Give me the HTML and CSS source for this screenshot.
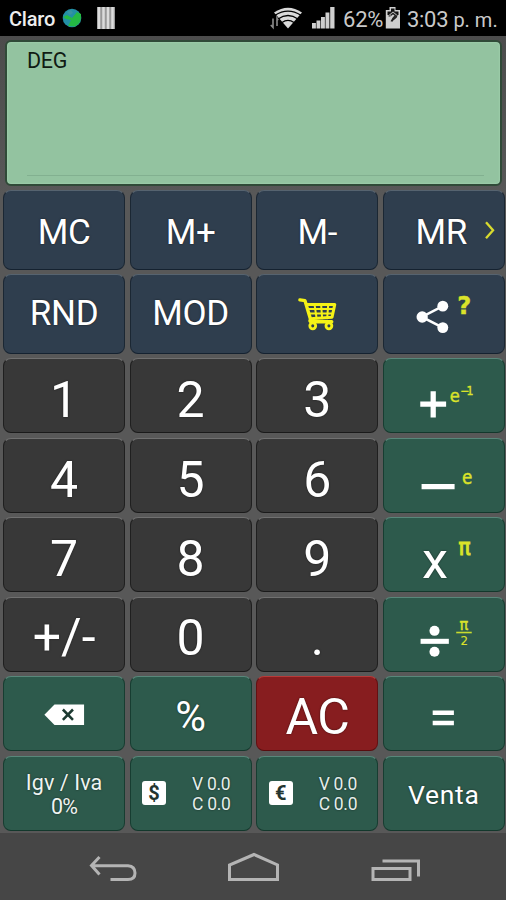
FILE: index.html
```html
<!DOCTYPE html>
<html lang="es">
<head>
<meta charset="utf-8">
<title>Calculadora</title>
<link rel="stylesheet" href="styles.css">
</head>
<body>
<div class="phone">
  <header class="status">
    <span class="carrier">Claro</span>
    <svg class="globe" width="20" height="20" viewBox="0 0 20 20"><circle cx="10" cy="10" r="9.3" fill="#238fa6"/><path d="M1 9 L5 7 L10 10 L15 4 L19 6 Q20 15 13 18.500 L6 18 L9 12 L4 11Z" fill="#24b944"/><path d="M5 4l4-2 2 3-3 2z" fill="#3894a0"/></svg>
    <svg class="stripes" width="18" height="22" viewBox="0 0 18 22"><rect width="18" height="22" fill="#999"/><path d="M2 0v22M6.500 0v22M11 0v22M15.500 0v22" stroke="#dcdcdc" stroke-width="2.500"/></svg>
    <svg class="signal" width="66" height="24" viewBox="0 0 66 24"><path d="M3 12.500v9M0.800 19l2.200 2.500V13M7 20v-8l1.500 2" fill="none" stroke="#8c8c8c" stroke-width="1.600"/><path d="M18 22.500L4 6.500Q18 -3 32 6.500Z" fill="#dadada"/><path d="M5 9.300Q18 1 31 9.300M8 13Q18 6 28 13M12 16.600Q18 12 24 16.600" fill="none" stroke="#000" stroke-width="1.300"/><path d="M42 22.500v-5.500h3.900v5.500zM46.500 22.500v-8h3.900v8zM51 22.500V11h3.900v11.500zM55.500 22.500V6.500h3.900v16zM60.200 22.500V1h4.300v21.500z" fill="#cfcfcf"/></svg>
    <span class="percent">62%</span>
    <svg class="battery" width="16" height="24" viewBox="0 0 16 24"><path d="M4.500 4V1h6v3H15v18.500H.800V4z" fill="#cfcfcf"/><path d="M2.500 9V5.500H6v-3h3.500v3h4V9" fill="#111"/><path d="M4.500 10.500c.5-4.500 7-4.500 7-1 0 3-4 2.500-5 6" fill="none" stroke="#222" stroke-width="2"/><path d="M4 9L8 5.500L12 9L8 12Z" fill="#cfcfcf"/><path d="M5.500 9.500L8 7.500L10.500 9.500L7.500 13" fill="none" stroke="#222" stroke-width="1.600"/></svg>
    <span class="time">3:03 <small>p. m.</small></span>
  </header>

  <main class="calc">
    <section class="lcd"><span class="mode">DEG</span><span class="rule"></span></section>
    <section class="keys">
      <div class="key navy">MC</div>
      <div class="key navy">M+</div>
      <div class="key navy">M-</div>
      <div class="key navy mr">MR<svg class="art" viewBox="0 0 122 79"><path d="M103 31.500L110 39.500L103 47.500" fill="none" stroke="#d8da2e" stroke-width="2.300"/></svg></div>
      <div class="key navy rnd">RND</div>
      <div class="key navy rnd">MOD</div>
      <div class="key navy"><svg class="art" viewBox="0 0 122 79"><g fill="none" stroke="#f5f216" stroke-linejoin="round" stroke-linecap="round"><path d="M43.500 25.300L48.500 26L54 44.500Q52.500 47 55 47H75" stroke-width="3.400"/><path d="M50 29.800H78L75.300 42.500L54 44" stroke-width="3"/><path d="M52 34.300H77M53 38.700H76M58 30L60 43.500M64.500 30L65.500 43.500M71.500 30L70.500 43.500" stroke-width="2"/><circle cx="56.200" cy="51" r="2.900" fill="#2f3e4e" stroke-width="2.800"/><circle cx="72.200" cy="51" r="2.900" fill="#2f3e4e" stroke-width="2.800"/></g></svg></div>
      <div class="key navy"><svg class="art" viewBox="0 0 122 79"><path d="M60.200 31.500L39.500 42.200L60.200 52.700" fill="none" stroke="#fff" stroke-width="2.500"/><g fill="#fff"><circle cx="39.800" cy="42.200" r="5.600"/><circle cx="60.200" cy="31.500" r="5.400"/><circle cx="60.200" cy="52.700" r="5.400"/></g><text class="hint query" x="81.300" y="39.300" font-size="24">?</text></svg></div>

      <div class="key dark">1</div>
      <div class="key dark">2</div>
      <div class="key dark">3</div>
      <div class="key green"><svg class="art" viewBox="0 0 122 75"><path d="M37.900 45.500H63.500M50.700 32.700V58.700" stroke="#fff" stroke-width="5.200"/><text class="hint" x="72.200" y="43" font-size="18">e</text><text class="hint" x="84" y="36.300" font-size="12" textLength="13">−1</text></svg></div>
      <div class="key dark">4</div>
      <div class="key dark">5</div>
      <div class="key dark">6</div>
      <div class="key green"><svg class="art" viewBox="0 0 122 75"><path d="M39.200 49H71.900" stroke="#fff" stroke-width="5.300"/><text class="hint" x="84.300" y="46.300" font-size="18.500">e</text></svg></div>
      <div class="key dark">7</div>
      <div class="key dark">8</div>
      <div class="key dark">9</div>
      <div class="key green"><svg class="art" viewBox="0 0 122 75"><text class="times" x="52.400" y="59.800">x</text><text class="hint pi" x="81.700" y="37.800" font-size="22">π</text></svg></div>
      <div class="key dark sign">+/-</div>
      <div class="key dark dot">0</div>
      <div class="key dark dot">.</div>
      <div class="key green"><svg class="art" viewBox="0 0 122 75"><path d="M38.200 44.700H66.200" stroke="#fff" stroke-width="5"/><g fill="#fff"><circle cx="52" cy="34.300" r="5"/><circle cx="52" cy="55" r="5"/></g><text class="hint" x="81" y="33.600" font-size="16">π</text><path d="M73.500 36H88.900" stroke="#c9dc2f" stroke-width="1.600"/><text class="hint thin" x="81.500" y="48.300" font-size="13">2</text></svg></div>
      <div class="key green"><svg class="art" viewBox="0 0 122 75"><path d="M41 38.200L51 28H80.300V48.300H51Z" fill="#fff"/><path d="M59.300 33L69.300 43.200M69.300 33L59.300 43.200" stroke="#1c3a31" stroke-width="2.500"/></svg></div>
      <div class="key green pct">%</div>
      <div class="key red">AC</div>
      <div class="key green"><svg class="art" viewBox="0 0 122 75"><path d="M50.200 36.300H71.200M50.200 46.300H71.200" stroke="#fff" stroke-width="4.400"/></svg></div>
      <div class="key green tax"><span>Igv / Iva</span><span class="rate">0%</span></div>
      <div class="key green money"><b class="coin">$</b><span class="rates">V 0.0<br>C 0.0</span></div>
      <div class="key green money"><b class="coin">€</b><span class="rates">V 0.0<br>C 0.0</span></div>
      <div class="key green venta">Venta</div>
    </section>
  </main>

  <nav class="nav">
    <svg width="506" height="67" viewBox="0 0 506 67"><g fill="none" stroke="#b4b4b4" stroke-width="3"><path d="M99.500 24L91.500 32.500L99.500 41.500M92 32.800H128Q135 33.500 135 40T128 46.500H110.500"/><path d="M229.500 46.500V32L254 21.500L277.500 32V46.500Z"/><path d="M373 35.500H410V46.500H373ZM382.500 28H418.500V43.500"/></g></svg>
  </nav>
</div>
</body>
</html>
```

FILE: styles.css
```css
* { box-sizing: border-box; }

body {
  margin: 0;
  background: #555;
  font-family: Roboto, "Liberation Sans", sans-serif;
}

.phone {
  width: 506px;
  height: 900px;
  display: flex;
  flex-direction: column;
  overflow: hidden;
}

.status {
  height: 36px;
  flex: none;
  display: flex;
  align-items: center;
  padding-left: 9px;
  background: #000;
  color: #c9c9c9;
  font-size: 22px;
  white-space: nowrap;
}
.status svg { flex: none; }
.carrier {
  width: 53px;
  color: #ededed;
  font-size: 20px;
  font-weight: 500;
  letter-spacing: -0.2px;
  padding-top: 2px;
}
.stripes { margin-left: 15px; }
.signal { margin: -1px 0 0 155px; }
.percent { width: 41px; margin-left: 7px; letter-spacing: -0.2px; padding-top: 3px; }
.battery { margin-left: 1px; }
.time { margin-left: 6px; letter-spacing: -0.3px; padding-top: 3px; }
.time small { font-size: 20px; letter-spacing: 0; }

.calc {
  height: 797px;
  flex: none;
  padding: 4px 1px 0 3px;
  background: linear-gradient(#4c4c4c, #585858 20%, #585858);
}

.lcd {
  height: 146px;
  margin: 0 3px 4px 2px;
  padding: 5px 16px 8px 20px;
  display: flex;
  flex-direction: column;
  justify-content: space-between;
  border: 2px solid #304a38;
  border-radius: 6px;
  background: #93c3a0;
  box-shadow: inset 0 0 2px #b0e0bb;
}
.mode { color: #101c14; font-size: 21.5px; line-height: 28px; letter-spacing: -0.3px; }
.rule { height: 1px; background: #82b090; }

.keys {
  display: grid;
  grid-template-columns: repeat(4, 122.2px);
  grid-template-rows: 79.5px 79.5px repeat(6, 75.1px);
  gap: 4.5px 4.4px;
}

.key {
  position: relative;
  display: flex;
  align-items: center;
  justify-content: center;
  border: 1.5px solid;
  border-radius: 8px;
  color: #fff;
  font-size: 50px;
  line-height: 1;
  white-space: nowrap;
  text-shadow: 0 0 2px rgba(0, 0, 0, 0.6);
}
.navy { background: #2f3e4e; border-color: #56636f #1b2733 #152230 #1b2733; font-size: 35px; padding-top: 5px; letter-spacing: -0.3px; }
.dark { background: #383838; border-color: #707070 #1f1f1f #1a1a1a #1f1f1f; padding-top: 9px; }
.green { background: #2d5a4c; border-color: #58877a #173d31 #13382c #173d31; }
.red { background: #871d1f; border-color: #b83a38 #641012 #580d0f #641012; font-size: 50px; padding-top: 7px; letter-spacing: -0.8px; }

.mr { padding-right: 5px; }
.rnd { padding: 0; }
.sign { padding-top: 6px; }
.dot { padding-top: 7px; }
.pct { font-size: 42px; padding-top: 6px; }
.venta { font-size: 26.5px; padding-top: 4px; letter-spacing: 0.7px; }

.art {
  position: absolute;
  inset: -1.5px;
  width: calc(100% + 3px);
  height: calc(100% + 3px);
}
.hint {
  fill: #dbe32a;
  stroke: #dbe32a;
  stroke-width: 0.4px;
  font-family: "DejaVu Sans Condensed", "DejaVu Sans", sans-serif;
  text-anchor: middle;
  text-shadow: none;
}
.query { font-family: "DejaVu Sans", sans-serif; font-weight: bold; }
.pi { stroke-width: 1px; }
.thin { stroke-width: 0.1px; }
.times { fill: #fff; font-size: 52px; text-anchor: middle; }

.tax { flex-direction: column; font-size: 21.5px; line-height: 24px; padding-top: 3px; color: #eef4f1; letter-spacing: 0.1px; }
.rate { letter-spacing: -0.8px; }

.money { justify-content: flex-start; padding-left: 11.5px; }
.coin {
  width: 24px;
  height: 24px;
  margin-top: -1px;
  border-radius: 3px;
  background: #fff;
  color: #24352f;
  font-size: 20px;
  line-height: 24px;
  text-align: center;
  text-shadow: none;
}
.rates { margin-left: 26px; color: #e4eeea; font-size: 17.5px; line-height: 20px; letter-spacing: -0.3px; }

.nav { flex: 1; background: #464646; }
.nav svg { display: block; }
```
